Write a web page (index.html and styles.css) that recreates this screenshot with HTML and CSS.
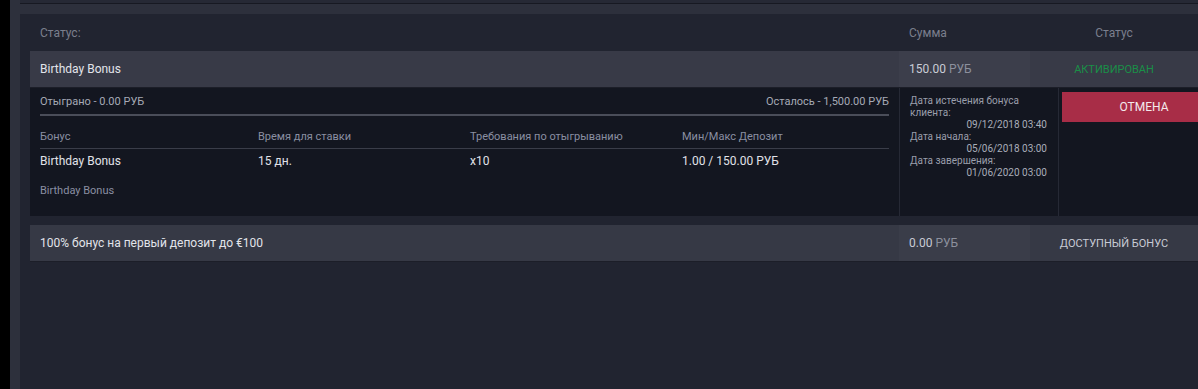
FILE: index.html
```html
<!DOCTYPE html>
<html lang="ru">
<head>
<meta charset="utf-8">
<link rel="stylesheet" href="styles.css">
</head>
<body>
<div class="shell">
  <div class="prev"></div>
  <div class="panel">
    <div class="thead">
      <div class="c-name">Статус:</div>
      <div class="c-sum">Сумма</div>
      <div class="c-status">Статус</div>
    </div>

    <div class="row">
      <div class="c-name">Birthday Bonus</div>
      <div class="c-sum sum-cell"><span><span class="amt">150.00</span> <span class="cur">РУБ</span></span></div>
      <div class="c-status active">АКТИВИРОВАН</div>
    </div>

    <div class="detail">
      <div class="d-main">
        <div class="progress-info">
          <span>Отыграно - 0.00 РУБ</span>
          <span>Осталось - 1,500.00 РУБ</span>
        </div>
        <div class="bar"></div>
        <div class="grid grid-head">
          <div>Бонус</div>
          <div>Время для ставки</div>
          <div>Требования по отыгрыванию</div>
          <div>Мин/Макс Депозит</div>
        </div>
        <div class="grid grid-vals">
          <div>Birthday Bonus</div>
          <div>15 дн.</div>
          <div>x10</div>
          <div>1.00 / 150.00 РУБ</div>
        </div>
        <div class="desc">Birthday Bonus</div>
      </div>
      <div class="d-dates">
        <div class="lbl">Дата истечения бонуса клиента:</div>
        <div class="val">09/12/2018 03:40</div>
        <div class="lbl">Дата начала:</div>
        <div class="val">05/06/2018 03:00</div>
        <div class="lbl">Дата завершения:</div>
        <div class="val">01/06/2020 03:00</div>
      </div>
      <div class="d-action">
        <button class="cancel">ОТМЕНА</button>
      </div>
    </div>

    <div class="row row2">
      <div class="c-name">100% бонус на первый депозит до €100</div>
      <div class="c-sum sum-cell"><span><span class="amt">0.00</span> <span class="cur">РУБ</span></span></div>
      <div class="c-status avail">ДОСТУПНЫЙ БОНУС</div>
    </div>
  </div>
</div>
</body>
</html>
```

FILE: styles.css
```css
html, body {
  margin: 0;
  padding: 0;
  height: 100%;
  overflow: hidden;
  background: #000;
}
body {
  font-family: Roboto, "Liberation Sans", Arial, sans-serif;
  padding-left: 10px;
}
.shell {
  background: #2d303c;
  height: 100%;
  padding-left: 10px;
  display: flex;
  flex-direction: column;
}
.prev {
  height: 3px;
  background: #262935;
  border-bottom: 1px solid #171922;
  margin-bottom: 10px;
  flex: none;
}
.panel {
  flex: 1;
  background: #212430;
  padding-left: 10px;
}
.thead, .row {
  display: flex;
  align-items: stretch;
}
.c-name {
  flex: 1;
  padding-left: 10px;
  display: flex;
  align-items: center;
}
.c-sum {
  width: 131px;
  flex: none;
  padding-left: 10px;
  box-sizing: border-box;
  display: flex;
  align-items: center;
}
.c-status {
  width: 168px;
  flex: none;
  display: flex;
  align-items: center;
  justify-content: center;
}
.thead {
  height: 37px;
  font-size: 12px;
  color: #7b7f8d;
}
.row {
  height: 36px;
  background: #383a47;
  border-bottom: 1px solid #1c1e28;
  font-size: 12px;
  color: #e2e4ea;
}
.sum-cell {
  background: #3c3e4b;
}
.amt { color: #c9ccd6; }
.cur { color: #8c909d; }
.active {
  color: #1a8f47;
  font-size: 11px;
}
.avail {
  color: #c8cbd5;
  font-size: 11px;
}
.row2 {
  margin-top: 9px;
  background: #363945;
}
.row2 .sum-cell { background: #3a3d49; }

.detail {
  display: flex;
  height: 128px;
  background: #131620;
}
.d-main {
  width: 869px;
  flex: none;
  box-sizing: border-box;
  padding: 0 10px;
}
.progress-info {
  display: flex;
  justify-content: space-between;
  font-size: 11px;
  color: #a6aab6;
  height: 26px;
  align-items: center;
}
.bar {
  height: 2px;
  background: #4a4d59;
}
.grid {
  display: grid;
  grid-template-columns: 218px 212px 212px 1fr;
}
.grid-head {
  margin-top: 12px;
  font-size: 11px;
  color: #8a8fa2;
  height: 16px;
  padding-bottom: 4px;
  align-items: center;
  border-bottom: 1px solid #3a3d49;
}
.grid-vals {
  font-size: 12px;
  color: #e0e2e8;
  height: 23px;
  align-items: center;
}
.desc {
  margin-top: 12px;
  font-size: 11px;
  color: #8a8fa2;
}
.d-dates {
  width: 159px;
  flex: none;
  box-sizing: border-box;
  border-left: 1px solid #262935;
  padding: 7px 11px 0 10px;
  font-size: 10px;
  line-height: 12px;
  color: #9a9eab;
}
.d-dates .lbl { padding-right: 24px; }
.d-dates .val {
  text-align: right;
  color: #a9adb9;
}
.d-action {
  width: 171px;
  flex: none;
  box-sizing: border-box;
  border-left: 1px solid #262935;
  padding: 4px 3px 0 3px;
}
.cancel {
  display: block;
  width: 100%;
  height: 30px;
  border: 0;
  background: #a82d47;
  color: #f3eaec;
  font-family: inherit;
  font-size: 12px;
  padding: 0;
}
```
